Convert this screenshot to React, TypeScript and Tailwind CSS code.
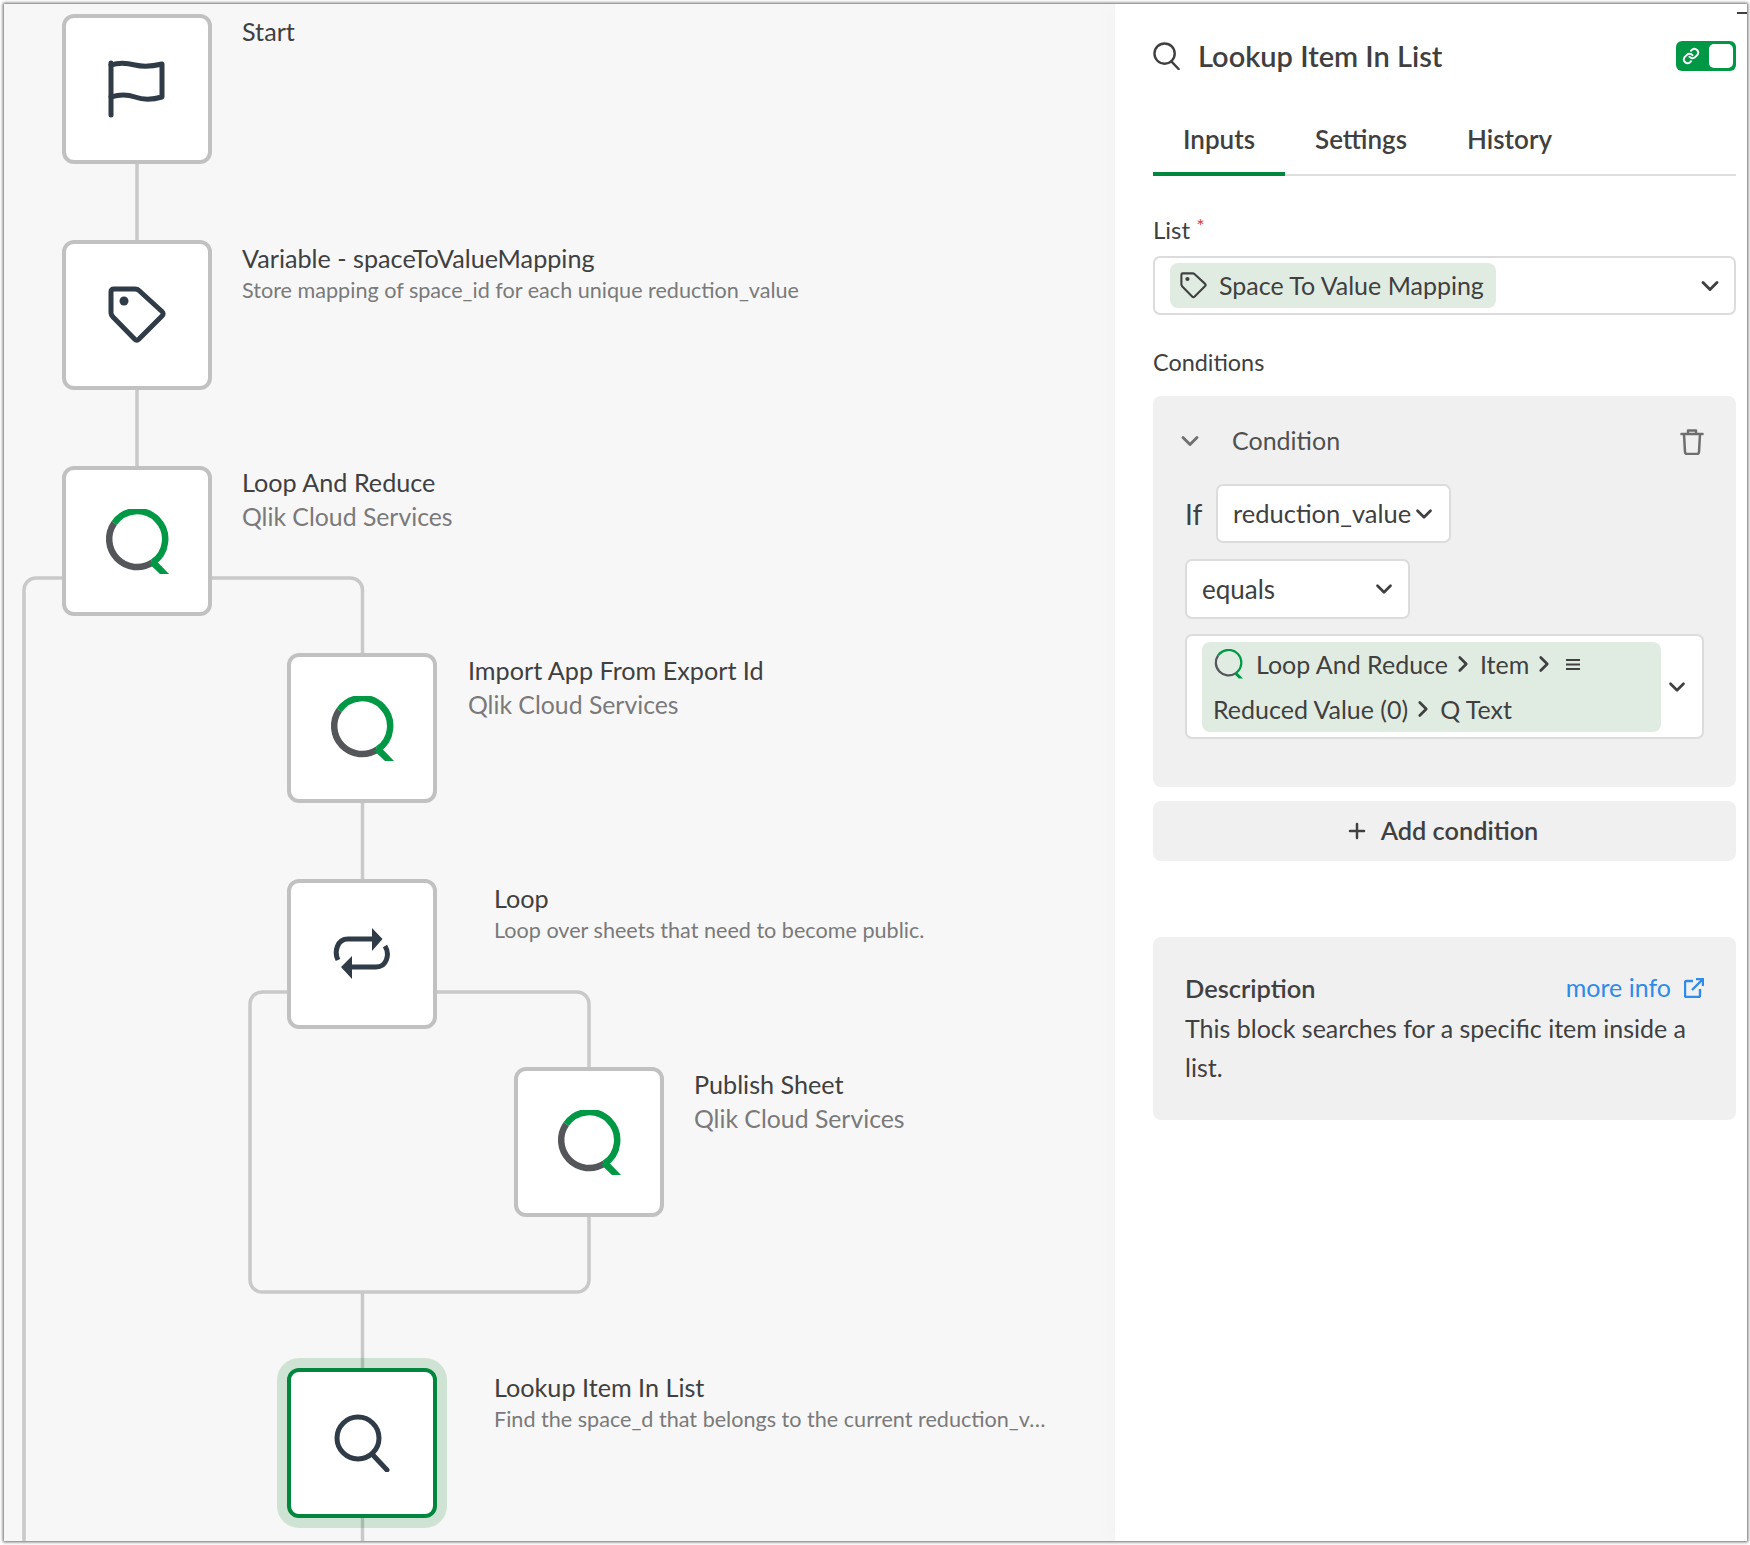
import { ChevronDown, ChevronRight, Plus } from 'lucide-react'
import React from 'react'

const ink = '#2f3b47'

const FlagIcon = () => (
  <svg width="58" height="58" viewBox="0 0 58 58" fill="none" stroke={ink} strokeWidth="5" strokeLinecap="round" strokeLinejoin="round">
    <path d="M3 3v52" />
    <path d="M3 5c9-3 16-2 24 0s15 2 27-1v33c-10 3-19 3-27 0s-15-3-24 0" />
  </svg>
)

const TagIcon = ({ className = 'size-[58px]', strokeWidth = 5 }: { className?: string; strokeWidth?: number }) => (
  <svg className={className} viewBox="0 0 58 58" fill="none" stroke="currentColor" strokeWidth={strokeWidth} strokeLinecap="round" strokeLinejoin="round">
    <path d="M6 3h21c2 0 3 .5 4 1.500l23 21c1.500 1.500 1.500 3 0 4.500L31 53c-1.500 1.500-3 1.500-4.500 0L5 31c-1-1-2-2-2-4V6c0-2 1-3 3-3z" />
    <circle cx="16" cy="15" r="4.500" fill="currentColor" stroke="none" />
  </svg>
)

const SearchIcon = ({ className = 'size-[58px]', strokeWidth = 5 }: { className?: string; strokeWidth?: number }) => (
  <svg className={className} viewBox="0 0 58 58" fill="none" stroke="currentColor" strokeWidth={strokeWidth} strokeLinecap="round">
    <circle cx="24" cy="24" r="21" />
    <path d="M38 40l15 16" />
  </svg>
)

const LoopIcon = () => (
  <svg width="58" height="52" viewBox="0 0 58 52" fill="none">
    <path d="M5 32C1 24 4 11 15 11h26" stroke={ink} strokeWidth="5" />
    <path d="M52 18c5 8 2 21-9 21H17" stroke={ink} strokeWidth="5" />
    <path d="M39 0l10.500 11L39 23zM19 28L8 39l11 12z" fill={ink} />
  </svg>
)

const QlikIcon = ({ className = 'size-[66px]', strokeWidth = 6.5 }: { className?: string; strokeWidth?: number }) => (
  <svg className={className} viewBox="0 0 66 66" fill="none">
    <path d="M11.200 14.100A28 28 0 0 0 49.400 53.600" stroke="#54565a" strokeWidth={strokeWidth} />
    <path d="M11.200 14.100A28 28 0 1 1 49.400 53.600" stroke="#009845" strokeWidth={strokeWidth} />
    <path d="M46 54.500l7-3 13 13.500h-9z" fill="#009845" />
  </svg>
)

const NodeQlik = () => <QlikIcon className="-ml-[2px] mt-[2px] size-[66px]" />

const Node = ({ className, children, selected }: { className: string; children: React.ReactNode; selected?: boolean }) => (
  <div
    className={`absolute flex size-[150px] items-center justify-center rounded-[12px] border-4 bg-white ${
      selected
        ? 'border-[#00873d] shadow-[0_0_0_10px_rgba(0,122,40,0.16)]'
        : 'border-[#c1c1c1]'
    } ${className}`}
  >
    {children}
  </div>
)

const Label = ({
  className,
  title,
  sub,
  small,
}: {
  className: string
  title: string
  sub?: string
  small?: boolean
}) => (
  <div className={`absolute whitespace-nowrap ${className}`}>
    <div className="text-[25.2px] leading-[32px] text-[#404040]">{title}</div>
    {sub && (
      <div className={`leading-[32px] text-[#7a7a7a] ${small ? 'text-[21.6px]' : 'mt-[3px] text-[24.8px]'}`}>{sub}</div>
    )}
  </div>
)

const Canvas = () => (
  <div className="relative w-[1111px] shrink-0 overflow-hidden bg-[#f7f7f7]">
    <div className="absolute -left-1 -top-1 h-[1545px] w-[1750px]">
      <svg className="absolute inset-0" width="1750" height="1545" fill="none" stroke="#c9c9c9" strokeWidth="3.500">
        <path d="M137 163v78M137 390v77" />
        <path d="M62 578H36a12 12 0 0 0-12 12v960" />
        <path d="M211 578h139.500a12 12 0 0 1 12 12v63" />
        <path d="M362.500 803v78" />
        <path d="M288 992h-26a12 12 0 0 0-12 12v276a12 12 0 0 0 12 12h315a12 12 0 0 0 12-12v-64" />
        <path d="M437 992h140a12 12 0 0 1 12 12v65" />
        <path d="M362.500 1292v77M362.500 1518v30" />
      </svg>

      <Node className="left-[62px] top-[14px]"><FlagIcon /></Node>
      <Label className="left-[242px] top-[15px]" title="Start" />

      <Node className="left-[62px] top-[240px]"><span className="text-[#2f3b47]"><TagIcon /></span></Node>
      <Label
        className="left-[242px] top-[242px]"
        title="Variable - spaceToValueMapping"
        sub="Store mapping of space_id for each unique reduction_value"
        small
      />

      <Node className="left-[62px] top-[466px]"><NodeQlik /></Node>
      <Label className="left-[242px] top-[466px]" title="Loop And Reduce" sub="Qlik Cloud Services" />

      <Node className="left-[287px] top-[653px]"><NodeQlik /></Node>
      <Label className="left-[468px] top-[654px]" title="Import App From Export Id" sub="Qlik Cloud Services" />

      <Node className="left-[287px] top-[879px]"><LoopIcon /></Node>
      <Label
        className="left-[494px] top-[882px]"
        title="Loop"
        sub="Loop over sheets that need to become public."
        small
      />

      <Node className="left-[514px] top-[1067px]"><NodeQlik /></Node>
      <Label className="left-[694px] top-[1068px]" title="Publish Sheet" sub="Qlik Cloud Services" />

      <Node className="left-[287px] top-[1368px]" selected>
        <span className="ml-[2px] text-[#2f3b47]"><SearchIcon /></span>
      </Node>
      <Label
        className="left-[494px] top-[1371px]"
        title="Lookup Item In List"
        sub="Find the space_d that belongs to the current reduction_v…"
        small
      />
    </div>
  </div>
)

const SelectBox = ({ className, children }: { className: string; children: React.ReactNode }) => (
  <div className={`flex items-center rounded-[7px] border-2 border-[#dcdcdc] bg-white ${className}`}>{children}</div>
)

const Crumb = () => <ChevronRight className="ml-[2px] mr-[4px] size-[26px]" strokeWidth={2.5} />

const Panel = () => (
  <div className="relative flex-1 bg-white pl-[38px] pr-[11px] text-[#404040] shadow-[-8px_0_14px_rgba(0,0,0,0.015)]">
    <div className="absolute right-0 top-[8px] h-[2px] w-[10px] bg-[#404040]" />

    <div className="flex h-[71px] items-end justify-between">
      <div className="mb-[1px] flex items-center gap-[17px]">
        <SearchIcon className="size-[28px]" />
        <h1 className="text-[29px] font-semibold leading-[36px]">Lookup Item In List</h1>
      </div>
      <div className="mb-[4px] flex h-[30px] w-[60px] items-center justify-between rounded-[6px] bg-[#009845] pl-[6px] pr-[3px]">
        <svg width="18" height="18" viewBox="0 0 24 24" fill="none" stroke="white" strokeWidth="2.500" strokeLinecap="round">
          <path d="M10 13a5 5 0 0 0 7.500.5l3-3a5 5 0 0 0-7-7l-1.500 1.500" />
          <path d="M14 11a5 5 0 0 0-7.500-.5l-3 3a5 5 0 0 0 7 7l1.500-1.500" />
        </svg>
        <div className="h-[24px] w-[24px] rounded-[5px] bg-white" />
      </div>
    </div>

    <div className="mt-[35px] flex h-[66px] border-b-2 border-[#dedede] text-[26px] font-semibold text-[#404040]">
      <div className="-mb-[2px] border-b-4 border-[#00873d] px-[30px] pt-[11px] leading-[36px]">Inputs</div>
      <div className="px-[30px] pt-[11px] leading-[36px]">Settings</div>
      <div className="px-[30px] pt-[11px] leading-[36px]">History</div>
    </div>

    <div className="mt-[38px] text-[24px] leading-[32px]">
      List <span className="align-top text-[20px] leading-[22px] text-[#dc423f]">*</span>
    </div>
    <SelectBox className="mt-[10px] h-[59px] justify-between pl-[15px] pr-[10px]">
      <div className="flex h-[45px] w-[326px] items-center gap-[12px] rounded-[8px] bg-[#e0ece2] pl-[10px] text-[25px] text-[#404040]">
        <TagIcon className="size-[27px]" strokeWidth={4.5} />
        Space To Value Mapping
      </div>
      <ChevronDown className="size-[28px]" strokeWidth={2.5} />
    </SelectBox>

    <div className="mt-[31px] text-[23.4px] leading-[32px]">Conditions</div>

    <div className="mt-[18px] h-[391px] rounded-[8px] bg-[#f0f0f0] px-[32px] pt-[27px]">
      <div className="flex h-[36px] items-center justify-between">
        <div className="-ml-[9px] flex items-center">
          <ChevronDown className="size-[28px] text-[#707070]" strokeWidth={2.5} />
          <span className="ml-[28px] text-[25px] text-[#505050]">Condition</span>
        </div>
        <svg width="24" height="27" viewBox="0 0 24 27" fill="none" stroke="#6e6e6e" strokeWidth="2.500" strokeLinecap="round" strokeLinejoin="round">
          <path d="M1.500 6h21M8 6V2.500h8V6M4 6l1 18c0 1 1 2 2 2h10c1 0 2-1 2-2l1-18" />
        </svg>
      </div>
      <div className="mt-[25px] flex items-center">
        <span className="w-[31px] text-[28px]">If</span>
        <SelectBox className="h-[59px] w-[235px] pl-[15px] text-[25.500px]">
          reduction_value
          <ChevronDown className="size-[26px]" strokeWidth={2.5} />
        </SelectBox>
      </div>
      <SelectBox className="mt-[16px] h-[60px] w-[225px] justify-between pl-[15px] pr-[11px] text-[26px]">
        equals
        <ChevronDown className="size-[26px]" strokeWidth={2.5} />
      </SelectBox>
      <SelectBox className="mt-[15px] h-[105px] w-[519px] pl-[15px]">
        <div className="h-[90px] w-[459px] rounded-[8px] bg-[#e0ece2] pl-[11px] text-[25px] leading-[45px]">
          <div className="flex h-[45px] items-center">
            <QlikIcon className="mr-[13px] size-[30px]" strokeWidth={5} />
            Loop And Reduce
            <Crumb />
            Item
            <Crumb />
            <svg className="ml-[5px]" width="14" height="13" viewBox="0 0 14 13" stroke="#404040" strokeWidth="2">
              <path d="M0 2h14M0 6.500h14M0 11h14" />
            </svg>
          </div>
          <div className="flex h-[45px] items-center">
            Reduced Value (0)
            <Crumb />
            Q Text
          </div>
        </div>
        <ChevronDown className="ml-[3px] size-[26px]" strokeWidth={2.5} />
      </SelectBox>
    </div>

    <div className="mt-[14px] flex h-[60px] items-center justify-center gap-[12px] rounded-[8px] bg-[#f0f0f0] pr-[6px] text-[25.3px] font-semibold">
      <Plus className="size-[24px]" strokeWidth={2.5} />
      Add condition
    </div>

    <div className="mt-[76px] h-[183px] rounded-[8px] bg-[#f0f0f0] px-[32px] pt-[32px]">
      <div className="flex h-[38px] items-center justify-between">
        <span className="text-[25.400px] font-semibold">Description</span>
        <span className="flex items-center gap-[13px] text-[25px] text-[#2f8bea]">
          more info
          <svg width="20" height="20" viewBox="0 0 20 20" fill="none" stroke="currentColor" strokeWidth="2.400">
            <path d="M9 3H2.500A1.500 1.500 0 0 0 1 4.500v13A1.500 1.500 0 0 0 2.500 19h12a1.500 1.500 0 0 0 1.500-1.500V11" />
            <path d="M8 12L19 1M12 1h7v7" />
          </svg>
        </span>
      </div>
      <p className="mt-[2px] text-[25px] leading-[39px]">This block searches for a specific item inside a list.</p>
    </div>
  </div>
)

export default function App() {
  return (
    <div className="h-[1545px] w-[1750px] bg-white pb-[4px] pl-[4px] pr-[3px] pt-[4px] [font-family:Lato,sans-serif]">
      <div className="flex h-full overflow-hidden shadow-[0_0_3px_1px_#666]">
        <Canvas />
        <Panel />
      </div>
    </div>
  )
}
